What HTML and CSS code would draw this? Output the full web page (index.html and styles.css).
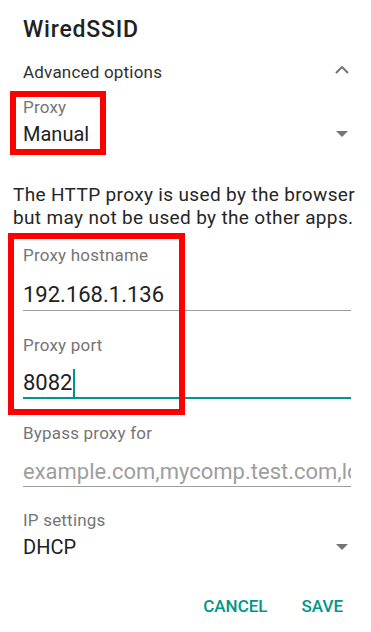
FILE: index.html
```html
<!DOCTYPE html>
<html lang="en">
<head>
    <meta charset="UTF-8">
    <meta name="viewport" content="width=device-width, initial-scale=1.0">
    <title>WiredSSID</title>
    <link rel="stylesheet" href="styles.css">
</head>
<body>
    <div class="dialog">
        <h2 class="title">WiredSSID</h2>

        <div class="row advanced">
            <span>Advanced options</span>
            <svg class="chevron" width="14" height="8" viewBox="0 0 14 8">
                <polyline points="1,7 7,1 13,7" fill="none" stroke="#757575" stroke-width="2"/>
            </svg>
        </div>

        <div class="field spinner proxy">
            <div class="label">Proxy</div>
            <div class="row value">
                <span>Manual</span>
                <span class="arrow"></span>
            </div>
        </div>

        <p class="note">The HTTP proxy is used by the browser but may not be used by the other apps.</p>

        <div class="field host">
            <div class="label">Proxy hostname</div>
            <div class="input">192.168.1.136</div>
        </div>

        <div class="field port">
            <div class="label">Proxy port</div>
            <div class="input focused">8082<span class="cursor"></span></div>
        </div>

        <div class="field bypass">
            <div class="label">Bypass proxy for</div>
            <div class="input hint">example.com,mycomp.test.com,localhost</div>
        </div>

        <div class="field spinner ip">
            <div class="label">IP settings</div>
            <div class="row value">
                <span>DHCP</span>
                <span class="arrow"></span>
            </div>
        </div>

        <div class="buttons">
            <button>CANCEL</button>
            <button>SAVE</button>
        </div>

        <!-- annotation boxes drawn over the screenshot -->
        <div class="mark mark-proxy"></div>
        <div class="mark mark-host"></div>
    </div>
</body>
</html>
```

FILE: styles.css
```css
body {
    margin: 0;
    padding: 0;
    background: #fff;
    font-family: Roboto, "Noto Sans", sans-serif;
    color: #212121;
}
.dialog {
    position: relative;
    width: 371px;
    height: 632px;
    padding: 16px 20px 0 23px;
    box-sizing: border-box;
    overflow: hidden;
}
.title {
    margin: 0;
    font-size: 23px;
    line-height: 28px;
    font-weight: 500;
    letter-spacing: 0.8px;
}
.row {
    display: flex;
    justify-content: space-between;
    align-items: center;
}
.advanced {
    margin-top: 16px;
    height: 24px;
    font-size: 17px;
    line-height: 24px;
    letter-spacing: 0.2px;
    color: #303030;
}
.chevron {
    margin-right: 2px;
    margin-top: -4px;
}
.label {
    font-size: 17px;
    line-height: 20px;
    letter-spacing: 0.2px;
    color: #757575;
}
.proxy {
    margin-top: 13px;
}
.value {
    margin-top: 4px;
    font-size: 20px;
    line-height: 26px;
}
.arrow {
    width: 0;
    height: 0;
    margin-right: 3px;
    border-left: 6px solid transparent;
    border-right: 6px solid transparent;
    border-top: 6px solid #757575;
}
.note {
    margin: 37px -20px 0 -10px;
    font-size: 19px;
    line-height: 22.5px;
    letter-spacing: 0.35px;
    color: #262626;
}
.host {
    margin-top: 16px;
}
.input {
    margin-top: 16px;
    height: 28px;
    font-size: 22px;
    line-height: 28px;
    padding-bottom: 1px;
    border-bottom: 1px solid #9e9e9e;
    white-space: nowrap;
    overflow: hidden;
}
.port {
    margin-top: 24px;
}
.port .input {
    margin-top: 14px;
}
.focused {
    padding-bottom: 0;
    border-bottom: 2px solid #009688;
}
.cursor {
    display: inline-block;
    width: 2px;
    height: 28px;
    margin-left: 1px;
    vertical-align: top;
    background: #009688;
}
.bypass {
    margin-top: 24px;
}
.bypass .input {
    margin-top: 15px;
    padding-bottom: 0;
}
.hint {
    color: #9e9e9e;
}
.ip {
    margin-top: 23px;
}
.buttons {
    display: flex;
    justify-content: flex-end;
    gap: 34px;
    margin-top: 34px;
    padding-right: 8px;
}
button {
    padding: 0;
    border: none;
    background: none;
    font-family: Roboto, sans-serif;
    font-size: 17px;
    line-height: 24px;
    font-weight: 500;
    color: #009688;
}
.mark {
    position: absolute;
    border: 6px solid #ff0000;
    box-sizing: border-box;
}
.mark-proxy {
    left: 10px;
    top: 91px;
    width: 96px;
    height: 64px;
}
.mark-host {
    left: 8px;
    top: 233px;
    width: 177px;
    height: 182px;
}
```
